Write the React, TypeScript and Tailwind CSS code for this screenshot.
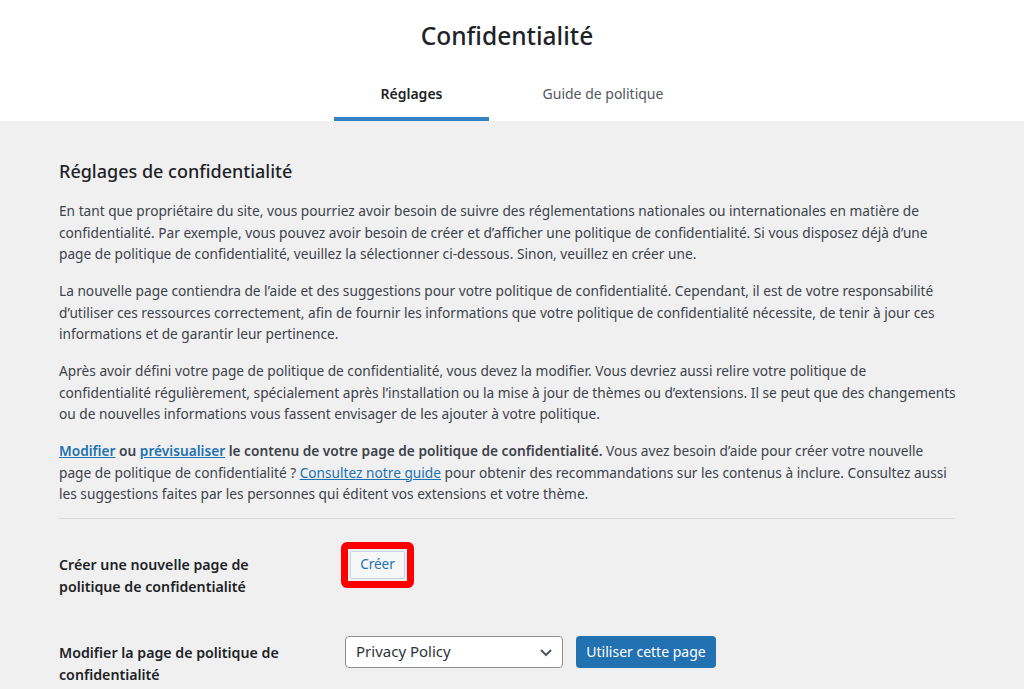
import React from "react";

const font = { fontFamily: '"Noto Sans", "Open Sans", sans-serif' };

export default function App() {
  return (
    <div className="min-h-[689px] bg-[#f0f0f1] text-[#3c434a]" style={font}>
      <header className="bg-white h-[121px] flex flex-col items-center">
        <h1 className="mt-[19px] mr-[10px] text-[24.5px] leading-[34px] font-medium text-[#1d2327]">Confidentialité</h1>
        <nav className="mt-[28px] ml-[27px] flex">
          <div className="w-[155px] h-[40px] flex flex-col items-center justify-between">
            <span className="text-[14px] leading-[24px] font-semibold text-[#1d2327] pt-[1px]">Réglages</span>
            <span className="block w-full h-[4px] bg-[#3582c4]"></span>
          </div>
          <div className="w-[228px] h-[40px] flex justify-center">
            <span className="text-[14px] leading-[24px] text-[#50575e] pt-[1px]">Guide de politique</span>
          </div>
        </nav>
      </header>
      <main className="pl-[59px] w-[955px]">
        <h2 className="pt-[37px] text-[18px] leading-[26px] font-medium text-[#1d2327]">Réglages de confidentialité</h2>
        <div className="mt-[16px] text-[13.7px] leading-[21.5px] flex flex-col gap-[15.5px] whitespace-nowrap">
          <p>
            En tant que propriétaire du site, vous pourriez avoir besoin de suivre des réglementations nationales ou internationales en matière de<br />
            confidentialité. Par exemple, vous pouvez avoir besoin de créer et d’afficher une politique de confidentialité. Si vous disposez déjà d’une<br />
            page de politique de confidentialité, veuillez la sélectionner ci-dessous. Sinon, veuillez en créer une.
          </p>
          <p>
            La nouvelle page contiendra de l’aide et des suggestions pour votre politique de confidentialité. Cependant, il est de votre responsabilité<br />
            d’utiliser ces ressources correctement, afin de fournir les informations que votre politique de confidentialité nécessite, de tenir à jour ces<br />
            informations et de garantir leur pertinence.
          </p>
          <p>
            Après avoir défini votre page de politique de confidentialité, vous devez la modifier. Vous devriez aussi relire votre politique de<br />
            confidentialité régulièrement, spécialement après l’installation ou la mise à jour de thèmes ou d’extensions. Il se peut que des changements<br />
            ou de nouvelles informations vous fassent envisager de les ajouter à votre politique.
          </p>
          <p>
            <strong className="font-semibold">
              <a href="#" className="text-[#2271b1] underline">Modifier</a> ou{" "}
              <a href="#" className="text-[#2271b1] underline">prévisualiser</a> le contenu de votre page de politique de confidentialité.
            </strong>{" "}
            Vous avez besoin d’aide pour créer votre nouvelle<br />
            page de politique de confidentialité ? <a href="#" className="text-[#2271b1] underline">Consultez notre guide</a> pour obtenir des recommandations sur les contenus à inclure. Consultez aussi<br />
            les suggestions faites par les personnes qui éditent vos extensions et votre thème.
          </p>
        </div>
        <hr className="mt-[13px] border-0 h-[1px] bg-[#dcdcde]" />
        <div className="flex mt-[23px]">
          <div className="w-[282px] text-[14.2px] leading-[22px] font-semibold text-[#1d2327] pt-[12px] whitespace-nowrap">
            Créer une nouvelle page de<br />politique de confidentialité
          </div>
          <div className="rounded-[6px] border-[7px] border-[#ff0000] h-[46px] w-[73px] flex items-center justify-center">
            <button className="h-[28px] w-[55px] bg-[#f6f7f7] border border-[#c3d4e6] rounded-[2px] text-[13.5px] text-[#2271b1]">Créer</button>
          </div>
        </div>
        <div className="flex mt-[38px]">
          <div className="w-[286px] text-[14.2px] leading-[22px] font-semibold text-[#1d2327] pt-[6px] whitespace-nowrap">
            Modifier la page de politique de<br />confidentialité
          </div>
          <div className="flex gap-[13px]">
            <div className="w-[218px] h-[32px] bg-white border border-[#8c8f94] rounded-[4px] flex items-center justify-between pl-[10px] pr-[8px]">
              <span className="text-[15px] text-[#2c3338]">Privacy Policy</span>
              <svg width="16" height="16" viewBox="0 0 16 16" fill="none" stroke="#50575e" strokeWidth="2">
                <path d="M3 6l5 5 5-5" />
              </svg>
            </div>
            <button className="w-[140px] h-[32px] bg-[#2271b1] text-white rounded-[4px] text-[14px]">Utiliser cette page</button>
          </div>
        </div>
      </main>
    </div>
  );
}
